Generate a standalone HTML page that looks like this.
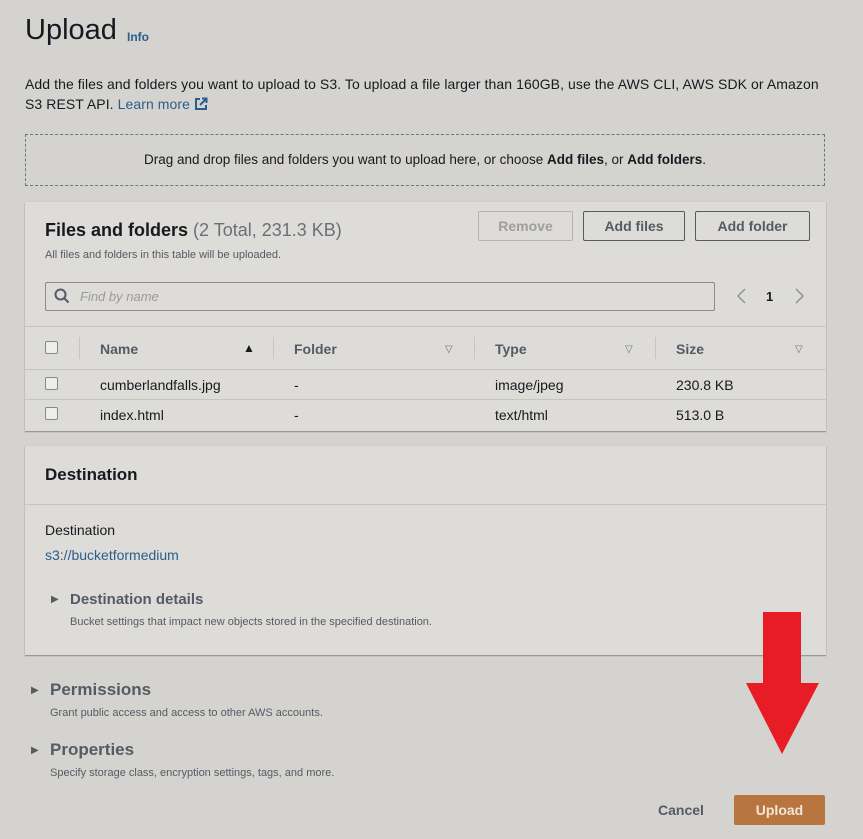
<!DOCTYPE html>
<html><head><meta charset="utf-8"><style>
*{margin:0;padding:0;box-sizing:border-box}
body{width:863px;height:839px;background:#d4d3d0;font-family:"Liberation Sans",sans-serif;color:#16191f;position:relative;overflow:hidden}
.a{position:absolute;white-space:nowrap}
.panel{position:absolute;left:25px;width:801px;background:#dddcd8;box-shadow:0 1px 1px #8a8a88,0 0 1px #bbb}
.btn{position:absolute;top:211px;height:30px;border:1px solid #545b64;border-radius:2px;font-weight:bold;font-size:14px;color:#545b64;text-align:center;line-height:28px}
.cb{position:absolute;left:45px;width:13px;height:13px;border:1px solid #7d8998;border-radius:2px;background:#eeede9}
.th{position:absolute;font-weight:bold;font-size:14px;color:#545b64;top:341px}
.tri{position:absolute;font-size:10px;color:#687078}
.td{position:absolute;font-size:14px;color:#16191f}
.hl{position:absolute;left:25px;width:801px;height:1px;background:#c6c5c1}
.vd{position:absolute;top:337px;width:1px;height:22px;background:#c6c5c1}
</style></head><body>
<div class="a" style="left:25px;top:14px;font-size:29px;color:#16191f">Upload</div>
<div class="a" style="left:127px;top:30px;font-size:12px;font-weight:bold;color:#2b5e8a">Info</div>
<div class="a" style="left:25px;top:74px;font-size:14px;line-height:20px;color:#16191f;letter-spacing:0.08px">Add the files and folders you want to upload to S3. To upload a file larger than 160GB, use the AWS CLI, AWS SDK or Amazon<br>S3 REST API. <span style="color:#2b5e8a">Learn more</span> <svg width="14" height="14" viewBox="0 0 14 14" style="vertical-align:-2px"><path d="M6 2H2v10h10V8M8 1.5h4.5V6M12.5 1.5 6 8" fill="none" stroke="#2b5e8a" stroke-width="2"/></svg></div>
<div class="a" style="left:25px;top:134px;width:800px;height:52px;border:1px dashed #5a7d8c;text-align:center;line-height:50px;font-size:13.5px">Drag and drop files and folders you want to upload here, or choose <b>Add files</b>, or <b>Add folders</b>.</div>

<div class="panel" style="top:202px;height:229px"></div>
<div class="a" style="left:45px;top:220px;font-size:18px;font-weight:bold">Files and folders <span style="font-weight:normal;color:#687078">(2 Total, 231.3 KB)</span></div>
<div class="a" style="left:45px;top:249px;font-size:11px;color:#545b64">All files and folders in this table will be uploaded.</div>
<div class="btn" style="left:478px;width:95px;border-color:#b5b4b1;color:#9e9e9c">Remove</div>
<div class="btn" style="left:583px;width:102px">Add files</div>
<div class="btn" style="left:695px;width:115px">Add folder</div>
<div class="a" style="left:45px;top:282px;width:670px;height:29px;border:1px solid #8c8c8a;border-radius:2px;background:#dddcd8"></div>
<svg class="a" style="left:54px;top:288px" width="16" height="16" viewBox="0 0 16 16"><circle cx="6.5" cy="6.5" r="5" fill="none" stroke="#545b64" stroke-width="2"/><path d="M10 10l4.5 4.5" stroke="#545b64" stroke-width="2"/></svg>
<div class="a" style="left:80px;top:289px;font-size:13px;font-style:italic;color:#9a9a98">Find by name</div>
<svg class="a" style="left:735px;top:288px" width="12" height="16"><path d="M10 1 3 8l7 7" fill="none" stroke="#8f9396" stroke-width="1.5"/></svg>
<div class="a" style="left:766px;top:289px;font-size:13px;font-weight:bold;color:#16191f">1</div>
<svg class="a" style="left:794px;top:288px" width="12" height="16"><path d="M2 1l7 7-7 7" fill="none" stroke="#8f9396" stroke-width="1.5"/></svg>
<div class="hl" style="top:326px"></div>
<div class="hl" style="top:369px"></div>
<div class="hl" style="top:399px"></div>
<div class="cb" style="top:341px"></div>
<div class="vd" style="left:79px"></div><div class="vd" style="left:273px"></div><div class="vd" style="left:474px"></div><div class="vd" style="left:655px"></div>
<div class="th" style="left:100px">Name</div><div class="a" style="left:243px;top:341px;font-size:12px">▲</div>
<div class="th" style="left:294px">Folder</div><div class="tri" style="left:445px;top:344px">▽</div>
<div class="th" style="left:495px">Type</div><div class="tri" style="left:625px;top:344px">▽</div>
<div class="th" style="left:676px">Size</div><div class="tri" style="left:795px;top:344px">▽</div>
<div class="cb" style="top:377px"></div>
<div class="td" style="left:100px;top:377px">cumberlandfalls.jpg</div><div class="td" style="left:294px;top:377px">-</div><div class="td" style="left:495px;top:377px">image/jpeg</div><div class="td" style="left:676px;top:377px">230.8 KB</div>
<div class="cb" style="top:407px"></div>
<div class="td" style="left:100px;top:407px">index.html</div><div class="td" style="left:294px;top:407px">-</div><div class="td" style="left:495px;top:407px">text/html</div><div class="td" style="left:676px;top:407px">513.0 B</div>

<div class="panel" style="top:446px;height:209px"></div>
<div class="a" style="left:45px;top:465px;font-size:17px;font-weight:bold">Destination</div>
<div class="hl" style="top:504px"></div>
<div class="a" style="left:45px;top:522px;font-size:14px">Destination</div>
<div class="a" style="left:45px;top:547px;font-size:14px;color:#2b5e8a">s3://bucketformedium</div>
<div class="a" style="left:51px;top:594px;font-size:10px;color:#545b64">▶</div>
<div class="a" style="left:70px;top:591px;font-size:15px;font-weight:bold;color:#545b64">Destination details</div>
<div class="a" style="left:70px;top:616px;font-size:11px;color:#545b64">Bucket settings that impact new objects stored in the specified destination.</div>

<div class="a" style="left:31px;top:685px;font-size:10px;color:#545b64">▶</div>
<div class="a" style="left:50px;top:680px;font-size:17px;font-weight:bold;color:#545b64">Permissions</div>
<div class="a" style="left:50px;top:707px;font-size:11px;color:#545b64">Grant public access and access to other AWS accounts.</div>
<div class="a" style="left:31px;top:745px;font-size:10px;color:#545b64">▶</div>
<div class="a" style="left:50px;top:740px;font-size:17px;font-weight:bold;color:#545b64">Properties</div>
<div class="a" style="left:50px;top:767px;font-size:11px;color:#545b64">Specify storage class, encryption settings, tags, and more.</div>

<div class="a" style="left:658px;top:802px;font-size:14px;font-weight:bold;color:#545b64">Cancel</div>
<div class="a" style="left:734px;top:795px;width:91px;height:30px;background:#b87540;border-radius:2px;color:#f2e6da;font-weight:bold;font-size:14px;text-align:center;line-height:30px">Upload</div>
<svg class="a" style="left:740px;top:610px" width="85" height="148"><path d="M23 2H61V73H79L42 144 6 73H23Z" fill="#e81c24"/></svg>
</body></html>
